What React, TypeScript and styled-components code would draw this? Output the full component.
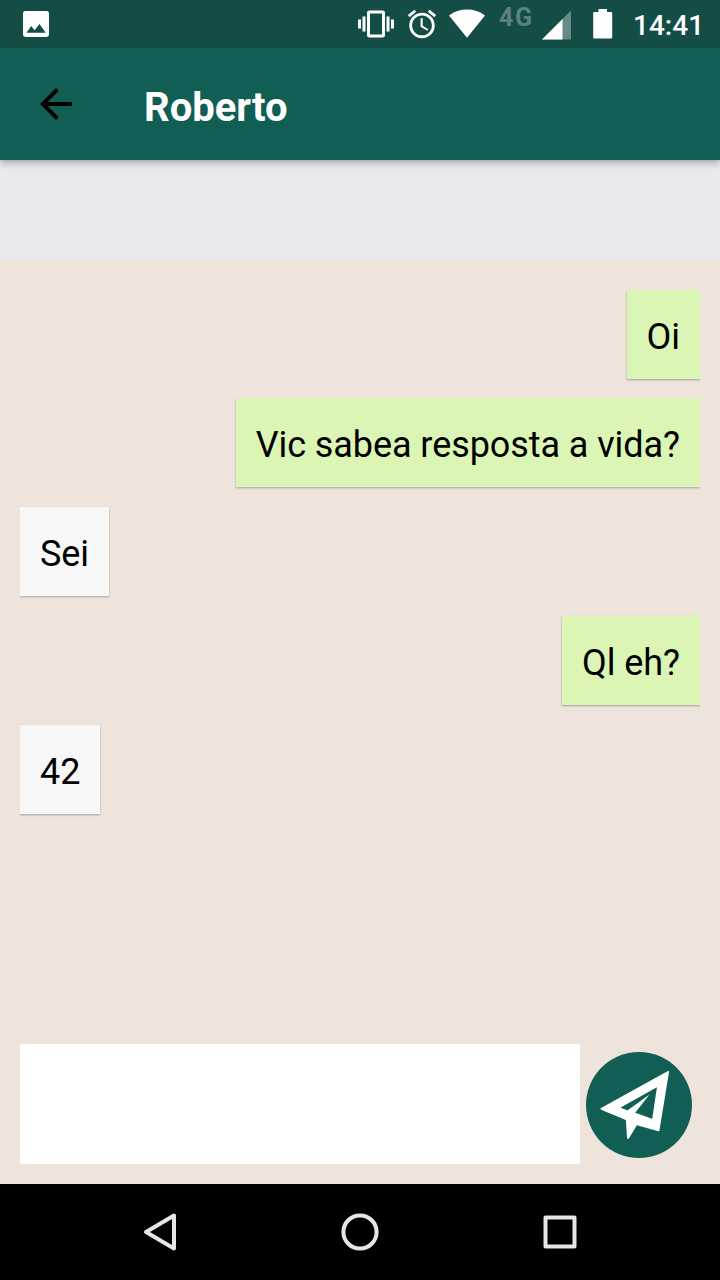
import React from "react";
import styled, { createGlobalStyle } from "styled-components";

const GlobalStyle = createGlobalStyle`
  * { box-sizing: border-box; }
  html, body { margin: 0; padding: 0; }
  body { font-family: Roboto, "Liberation Sans", sans-serif; }
`;

const Screen = styled.div`
  width: 720px;
  height: 1280px;
  display: flex;
  flex-direction: column;
  overflow: hidden;
  background: #eee4dc;
`;

const StatusBar = styled.div`
  flex: none;
  position: relative;
  z-index: 1;
  height: 48px;
  display: flex;
  align-items: flex-start;
  padding: 0 19px 0 18px;
  background: #134d45;
  color: #fff;
`;

const StatusIcon = styled.svg<{ $gap?: number; $top?: number }>`
  flex: none;
  display: block;
  margin-left: ${(p) => p.$gap ?? 0}px;
  margin-top: ${(p) => p.$top ?? 0}px;
  fill: currentColor;
`;

const Spacer = styled.div`
  flex: 1;
`;

const Network = styled.span`
  flex: none;
  width: 34px;
  margin: 3px 0 0 14px;
  font-size: 25px;
  line-height: 30px;
  font-weight: 700;
  letter-spacing: 1.6px;
  color: #5c847e;
`;

const Clock = styled.span`
  flex: none;
  width: 68px;
  margin-left: 20px;
  font-size: 28px;
  line-height: 51px;
  font-weight: 500;
  white-space: nowrap;
`;

const AppBar = styled.header`
  flex: none;
  position: relative;
  height: 112px;
  display: flex;
  align-items: center;
  padding: 0 32px;
  background: #115e54;
  box-shadow: 0 2px 8px rgba(0, 0, 0, 0.36);
`;

const BackButton = styled.button`
  width: 48px;
  height: 48px;
  padding: 0;
  border: 0;
  background: none;
`;

const Title = styled.h1`
  margin: 7px 0 0 64px;
  font-size: 40px;
  line-height: 48px;
  font-weight: 700;
  color: #fff;
`;

const Strip = styled.div`
  flex: none;
  height: 100px;
  background: #e9e9ef;
`;

const Messages = styled.main`
  flex: 1;
  display: flex;
  flex-direction: column;
  gap: 19.7px;
  margin: 20px 20px 0;
  padding-top: 9.8px;
  overflow: hidden;
`;

const Bubble = styled.div<{ $own?: boolean }>`
  align-self: ${(p) => (p.$own ? "flex-end" : "flex-start")};
  height: 89px;
  padding: 21px 20px 0;
  font-size: 36px;
  line-height: 52px;
  letter-spacing: -0.07px;
  white-space: nowrap;
  color: #000;
  background: ${(p) => (p.$own ? "#dbf5b4" : "#f7f7f7")};
  box-shadow: 0 1px 2px rgba(0, 0, 0, 0.3);
`;

const Composer = styled.form`
  flex: none;
  display: flex;
  align-items: center;
  height: 140px;
  padding: 0 27px 20px 20px;
`;

const MessageInput = styled.input`
  flex: none;
  width: 560px;
  height: 120px;
  padding: 0 20px;
  border: 0;
  outline: 0;
  font: 36px Roboto, sans-serif;
  background: #fff;
`;

const SendButton = styled.button`
  flex: none;
  width: 108px;
  height: 108px;
  margin: 2px 0 0 5px;
  padding: 0;
  border: 0;
  background: none;
`;

const NavBar = styled.nav`
  flex: none;
  height: 96px;
  display: flex;
  align-items: center;
  justify-content: center;
  gap: 152px;
  background: #000;
`;

const NavIcon = styled.svg`
  width: 48px;
  height: 48px;
  fill: none;
  stroke: #e6e6e6;
  stroke-width: 4;
  stroke-linejoin: round;
`;

const BlockSvg = styled.svg`
  display: block;
`;

const messages = [
  { text: "Oi", own: true },
  { text: "Vic sabea resposta a vida?", own: true },
  { text: "Sei", own: false },
  { text: "Ql eh?", own: true },
  { text: "42", own: false },
];

export default function App() {
  return (
    <>
      <GlobalStyle />
      <Screen>
        <StatusBar>
          <StatusIcon width="36" height="36" viewBox="0 0 36 36" $top={6}>
            <path
              fillRule="evenodd"
              d="M7.4 5h21.2a2.4 2.4 0 0 1 2.4 2.4v21.2a2.4 2.4 0 0 1-2.4 2.4H7.4A2.4 2.4 0 0 1 5 28.6V7.4A2.4 2.4 0 0 1 7.4 5zM8.5 26.7h19.2l-6.2-8.7-4.9 6.2-3.4-4.2z"
            />
          </StatusIcon>
          <Spacer />
          <StatusIcon width="36" height="36" viewBox="0 0 24 24" $top={6}>
            <path d="M0 15h2V9H0v6zm3 2h2V7H3v10zm19-8v6h2V9h-2zm-3 8h2V7h-2v10zM16.5 3h-9C6.67 3 6 3.67 6 4.5v15c0 .83.67 1.5 1.5 1.5h9c.83 0 1.5-.67 1.5-1.5v-15c0-.83-.67-1.5-1.5-1.5zM16 19H8V5h8v14z" />
          </StatusIcon>
          <StatusIcon width="34" height="34" viewBox="0 0 24 24" $gap={11} $top={7}>
            <path d="M22 5.72l-4.6-3.86-1.29 1.53 4.6 3.86L22 5.72zM7.88 3.39L6.6 1.86 2 5.71l1.29 1.53 4.59-3.85zM12.5 8H11v6l4.75 2.85.75-1.23-4-2.37V8zM12 4c-4.97 0-9 4.03-9 9s4.02 9 9 9c4.97 0 9-4.03 9-9s-4.03-9-9-9zm0 16c-3.87 0-7-3.13-7-7s3.13-7 7-7 7 3.13 7 7-3.13 7-7 7z" />
          </StatusIcon>
          <StatusIcon width="36" height="30" viewBox="0 0 36 30" $gap={10} $top={9}>
            <path d="M0 6.4Q8 .6 18 .6T36 6.4L18 28.7z" />
          </StatusIcon>
          <Network>4G</Network>
          <StatusIcon width="29" height="30" viewBox="0 0 29 30" $gap={9} $top={10}>
            <path d="M0 29.5L29 .5v29z" opacity="0.35" />
            <path d="M0 29.5L20.5 9v20.5z" />
          </StatusIcon>
          <StatusIcon width="20" height="30" viewBox="0 0 20 30" $gap={22} $top={9}>
            <path d="M5.5 0h8.5v3h4.2a1 1 0 0 1 1 1v24.5a1 1 0 0 1-1 1H1.2a1 1 0 0 1-1-1V4A1 1 0 0 1 1.2 3h4.3z" />
          </StatusIcon>
          <Clock>14:41</Clock>
        </StatusBar>
        <AppBar>
          <BackButton aria-label="Voltar">
            <BlockSvg width="48" height="48" viewBox="0 0 24 24">
              <path d="M20 11H7.83l5.59-5.59L12 4l-8 8 8 8 1.41-1.41L7.83 13H20v-2z" />
            </BlockSvg>
          </BackButton>
          <Title>Roberto</Title>
        </AppBar>
        <Strip />
        <Messages>
          {messages.map((m) => (
            <Bubble key={m.text} $own={m.own}>
              {m.text}
            </Bubble>
          ))}
        </Messages>
        <Composer>
          <MessageInput aria-label="Mensagem" />
          <SendButton type="button" aria-label="Enviar">
            <BlockSvg width="108" height="108" viewBox="0 0 108 108">
              <circle cx="54" cy="54" r="53" fill="#115e54" />
              <path
                fill="#fff"
                stroke="#fff"
                strokeWidth="2"
                strokeLinejoin="round"
                fillRule="evenodd"
                d="M83 21L16.5 57.8L41.8 68.3L43 87L51.5 73L73.5 79.2zM73.2 34.5L33 57L42 60.3L50 62.7L68 69.3z"
              />
              <path fill="#fff" d="M64.5 43.5L41 60.5L48.8 63.5z" />
            </BlockSvg>
          </SendButton>
        </Composer>
        <NavBar>
          <NavIcon viewBox="0 0 48 48">
            <path d="M38 7.5V40.5L10 24z" />
          </NavIcon>
          <NavIcon viewBox="0 0 48 48">
            <circle cx="24" cy="24" r="16.6" />
          </NavIcon>
          <NavIcon viewBox="0 0 48 48">
            <rect x="9.5" y="9.5" width="29" height="29" />
          </NavIcon>
        </NavBar>
      </Screen>
    </>
  );
}
